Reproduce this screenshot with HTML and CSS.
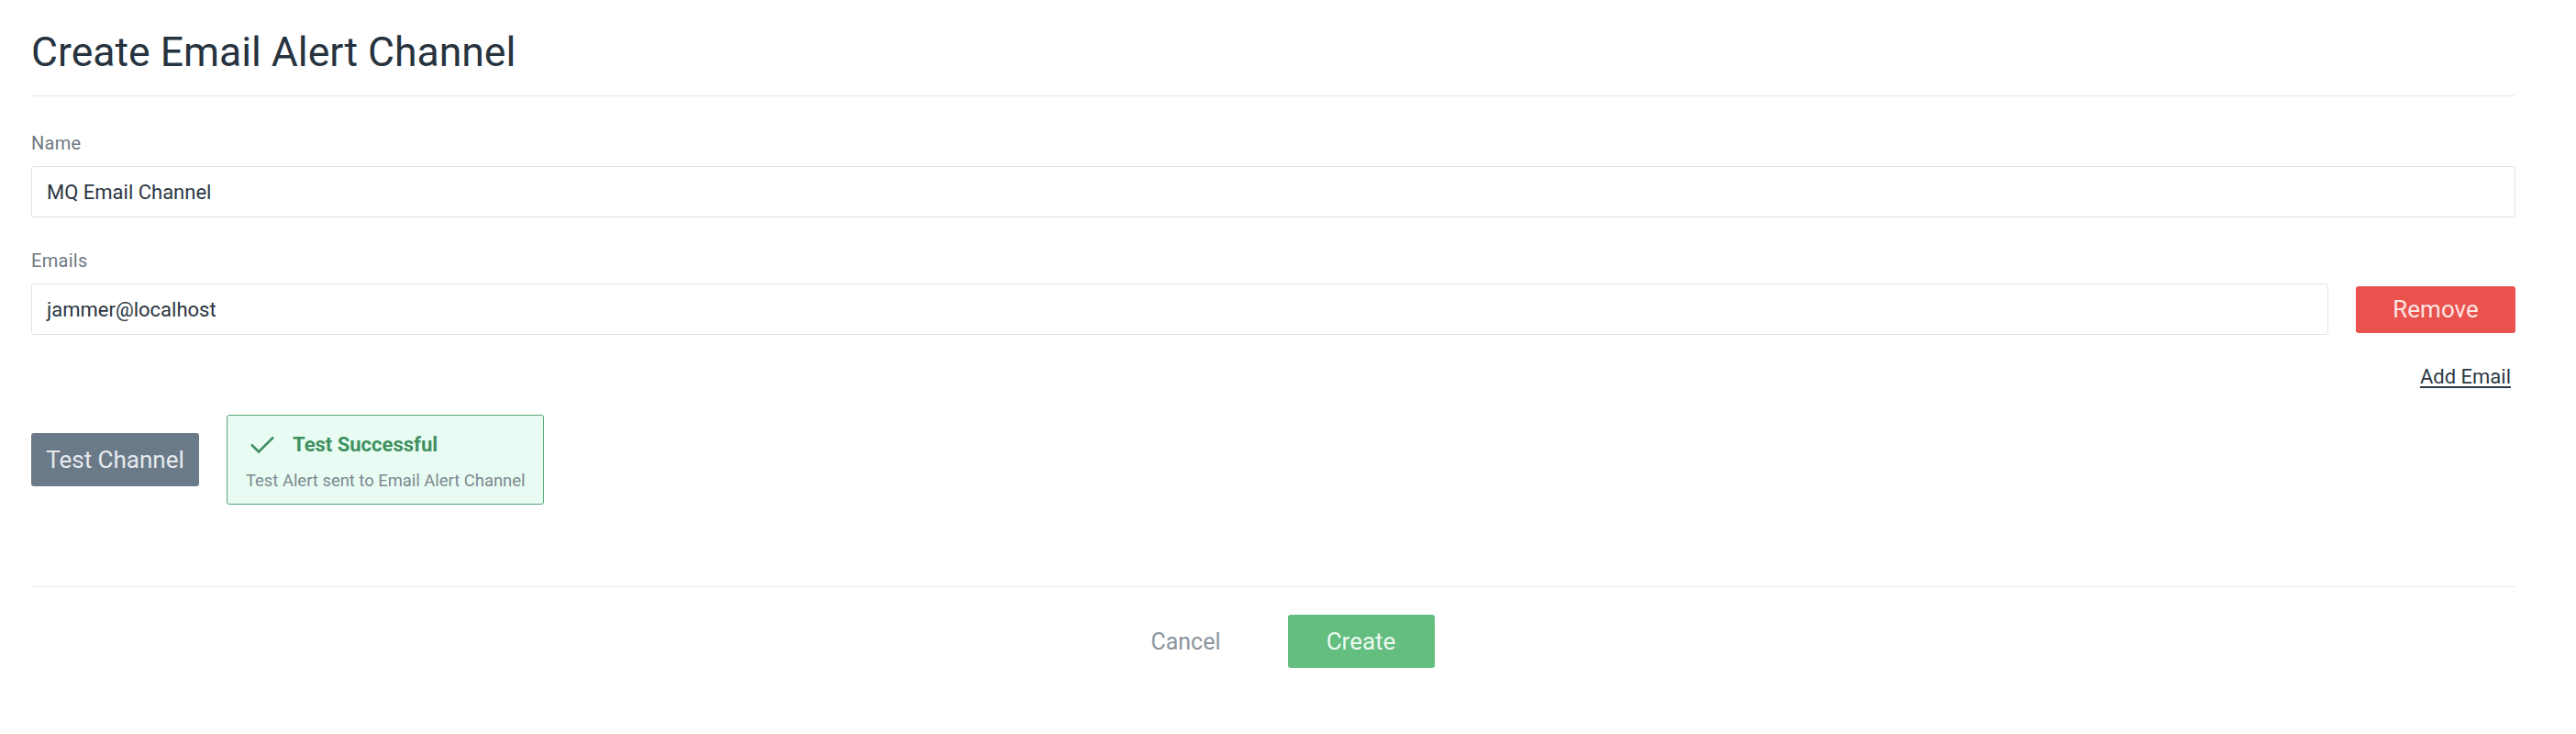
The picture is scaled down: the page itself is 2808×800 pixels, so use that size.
FILE: index.html
```html
<!DOCTYPE html>
<html lang="en">
<head>
<meta charset="utf-8">
<title>Create Email Alert Channel</title>
<link rel="stylesheet" href="styles.css">
</head>
<body>
<div class="page">
  <h1 class="title">Create Email Alert Channel</h1>
  <div class="form">
    <div class="field">
      <label class="label">Name</label>
      <div class="input">MQ Email Channel</div>
    </div>
    <div class="field">
      <label class="label">Emails</label>
      <div class="email-row">
        <div class="input input-grow">jammer@localhost</div>
        <button class="btn btn-remove">Remove</button>
      </div>
      <div class="add-row"><a class="add-link">Add Email</a></div>
    </div>
    <div class="test-row">
      <button class="btn btn-test">Test Channel</button>
      <div class="alert">
        <div class="alert-head">
          <svg class="alert-icon" width="28" height="20" viewBox="0 0 28 20"><path d="M2 9.5 L10 17.5 L26 1.5" fill="none" stroke="#3f9160" stroke-width="2.6"/></svg>
          <span class="alert-title">Test Successful</span>
        </div>
        <div class="alert-text">Test Alert sent to Email Alert Channel</div>
      </div>
    </div>
  </div>
  <div class="footer">
    <button class="btn btn-cancel">Cancel</button>
    <button class="btn btn-create">Create</button>
  </div>
</div>
</body>
</html>
```

FILE: styles.css
```css
* { box-sizing: border-box; }
html, body { margin: 0; padding: 0; background: #ffffff; }
body { font-family: Roboto, "Liberation Sans", sans-serif; color: #2b3642; }

.page { padding: 0 66px 0 34px; }

.title {
  margin: 0;
  padding: 31px 0 21px;
  font-size: 44.5px;
  line-height: 52px;
  font-weight: 400;
  color: #27333e;
  border-bottom: 1px solid #e4ebf1;
}

.form { padding-top: 40px; }

.field { display: flex; flex-direction: column; margin-bottom: 36px; }

.label {
  font-size: 20px;
  letter-spacing: 0.3px;
  line-height: 22px;
  color: #6f7a83;
  margin-bottom: 14px;
}

.input {
  height: 56px;
  border: 1px solid #dde3e6;
  border-radius: 3px;
  padding: 0 16px;
  display: flex;
  align-items: center;
  font-size: 22px;
  color: #2b3642;
}

.email-row { display: flex; align-items: center; gap: 30px; }
.input-grow { flex: 1; }

.btn {
  border: none;
  border-radius: 3px;
  font-family: Roboto, "Liberation Sans", sans-serif;
  font-size: 26px;
  cursor: pointer;
  padding: 0;
}

.btn-remove {
  width: 174px;
  height: 51px;
  background: #ea524e;
  color: #fde4e3;
}

.add-row { display: flex; justify-content: flex-end; padding: 35px 5px 0 0; }
.add-link {
  font-size: 22px;
  line-height: 22px;
  color: #2e3a46;
  text-decoration: underline;
  text-underline-offset: 3px;
}

.field:nth-child(2) { margin-bottom: 30px; }

.test-row { display: flex; align-items: center; gap: 30px; padding-bottom: 89px; }

.btn-test {
  width: 183px;
  height: 58px;
  background: #6b7a88;
  color: #e6eaee;
}

.alert {
  width: 346px;
  height: 98px;
  background: #e9fcf3;
  border: 1.5px solid #58a476;
  border-radius: 3px;
  padding: 20px 18px 0 20px;
}
.alert-head { display: flex; align-items: center; gap: 19px; padding-left: 4px; }
.alert-icon { display: block; }
.alert-title { font-size: 22px; font-weight: 700; color: #3f9160; line-height: 24px; }
.alert-text { margin-top: 17px; font-size: 18.4px; color: #7c8891; line-height: 20px; white-space: nowrap; }

.footer {
  border-top: 1px solid #e4ebf1;
  padding-top: 30px;
  display: flex;
  justify-content: center;
  gap: 31px;
}

.btn-cancel {
  width: 160px;
  height: 58px;
  background: transparent;
  color: #8c959e;
  font-size: 25px;
}

.btn-create {
  width: 160px;
  height: 58px;
  background: #63be80;
  color: #eef9f1;
}
```
